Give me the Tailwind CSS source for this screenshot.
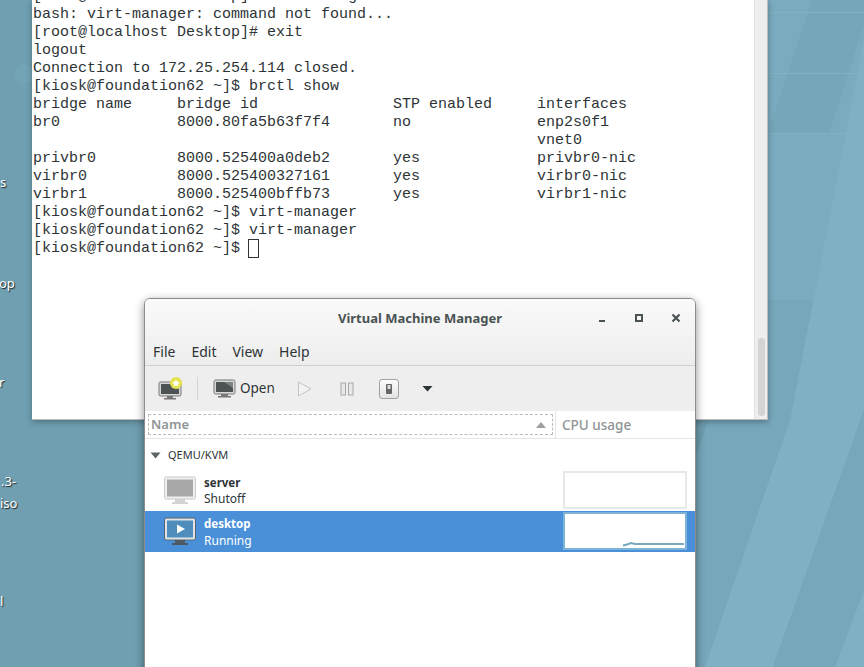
<!DOCTYPE html>
<html lang="en">
<head>
  <meta charset="UTF-8" />
  <title>Virtual Machine Manager</title>
  <script src="https://cdn.jsdelivr.net/npm/@tailwindcss/browser@4"></script>
</head>
<body class="relative w-[864px] h-[667px] overflow-hidden bg-[#74a5b7]">

  <!-- wallpaper -->
  <svg class="absolute inset-0" width="864" height="667" viewBox="0 0 864 667">
    <rect width="864" height="667" fill="#6f9fb1" />
    <polygon points="620,667 860,0 864,0 864,667" fill="#76a7ba" />
    <polygon points="768,0 864,0 864,300 768,300" fill="#7aabbe" />
    <polygon points="705,667 790,420 864,40 864,410 773,667" fill="#7fb0c3" />
    <polygon points="773,667 864,410 864,590 835,667" fill="#76a7ba" />
    <polygon points="835,667 864,590 864,667" fill="#7fb0c3" />
    <polygon points="812,0 864,0 864,25 829,133 768,133" fill="#75a6b9" />
    <rect x="768" y="12" width="96" height="1" fill="#81b1c3" />
    <rect x="768" y="73" width="96" height="1" fill="#81b1c3" />
    <rect x="768" y="133" width="96" height="1" fill="#81b1c3" />
    <circle cx="24" cy="74" r="10" fill="#73a4b6" />
  </svg>

  <!-- desktop icon labels, cut off at the screen edge -->
  <div class="absolute left-0 top-0 font-['Noto_Sans',sans-serif] text-[13px] leading-4 text-white [text-shadow:1px_1px_1px_#222]">
    <span class="absolute left-0 top-[174px]">s</span>
    <span class="absolute left-[-1px] top-[275px]">op</span>
    <span class="absolute left-[-1px] top-[374px]">r</span>
    <span class="absolute left-px top-[473px]">.3-</span>
    <span class="absolute left-0 top-[495px]">iso</span>
    <span class="absolute left-0 top-[593px]">l</span>
  </div>

  <!-- terminal window -->
  <div class="absolute left-[32px] top-0 w-[736px] h-[420px] flex bg-white border-b border-r border-[#bdbdbd] shadow-[0_2px_6px_rgba(0,0,0,0.3)]">
    <pre class="flex-1 h-full overflow-hidden pl-px text-[15px] leading-[18px] text-[#2e3436] font-['Liberation_Mono',monospace]"><div class="mt-[-12px]">[root@localhost Desktop]# virt-manager
bash: virt-manager: command not found...
[root@localhost Desktop]# exit
logout
Connection to 172.25.254.114 closed.
[kiosk@foundation62 ~]$ brctl show
bridge name     bridge id               STP enabled     interfaces
br0             8000.80fa5b63f7f4       no              enp2s0f1
                                                        vnet0
privbr0         8000.525400a0deb2       yes             privbr0-nic
virbr0          8000.525400327161       yes             virbr0-nic
virbr1          8000.525400bffb73       yes             virbr1-nic
[kiosk@foundation62 ~]$ virt-manager
[kiosk@foundation62 ~]$ virt-manager
[kiosk@foundation62 ~]$ <span class="inline-block ml-[-1px] mt-[-1px] w-[11px] h-[19px] border border-[#2e3436] align-top"></span></div></pre>
    <div class="w-[13px] h-full bg-[#eeeeee] border-l border-[#e2e2e2] flex flex-col justify-end items-center pb-[3px]">
      <div class="w-[7px] h-[78px] rounded-[4px] bg-[#d4d4d4]"></div>
    </div>
  </div>

  <!-- virt-manager window -->
  <div class="absolute left-[144px] top-[298px] w-[552px] h-[380px] flex flex-col rounded-t-[6px] border border-[#8c8c8c] bg-white shadow-[0_3px_10px_rgba(0,0,0,0.45)] overflow-hidden font-['Noto_Sans',sans-serif] text-[#2e3436]">

    <div class="bg-linear-to-b from-[#fafafa] to-[#ededed] h-[67px] shrink-0 border-b border-[#d0d0d0] flex flex-col">
      <div class="relative h-[40px] shrink-0 flex items-center justify-center">
        <span class="text-[13px] font-bold text-[#4a5254]">Virtual Machine Manager</span>
        <div class="absolute right-[14px] top-[14px] flex items-center gap-[27px]">
          <svg width="10" height="10" viewBox="0 0 10 10"><rect x="2" y="7" width="6" height="2" fill="#4a5254" /></svg>
          <svg width="10" height="10" viewBox="0 0 10 10"><rect x="2" y="2" width="6" height="6" fill="none" stroke="#4a5254" stroke-width="2" /></svg>
          <svg width="10" height="10" viewBox="0 0 10 10"><path d="M1.5 1.5 8.5 8.5M8.5 1.5 1.5 8.5" stroke="#4a5254" stroke-width="2.2" /></svg>
        </div>
      </div>
      <div class="flex gap-[16px] pl-[8px] text-[14px] leading-[20px] mt-[3px]">
        <span>File</span><span>Edit</span><span>View</span><span>Help</span>
      </div>
    </div>

    <!-- toolbar -->
    <div class="h-[45px] shrink-0 bg-[#eeeeee] flex items-center pl-[13px]">
      <svg width="26" height="24" viewBox="0 0 26 24">
        <rect x="1" y="5" width="22" height="14" rx="1.5" fill="#d8d8d8" stroke="#777" />
        <rect x="3" y="7" width="18" height="10" fill="#4d5254" />
        <path d="M12 7h9v6z" fill="#7c8284" />
        <path d="M9 19h6v2H9zM6 21h12v1.5H6z" fill="#777" />
        <circle cx="18" cy="6" r="6" fill="#e4e34e" />
        <path d="M18 2.2l1.2 2.5 2.7.3-2 1.9.5 2.7-2.4-1.3-2.4 1.3.5-2.7-2-1.9 2.7-.3z" fill="#fff" />
      </svg>
      <div class="w-px h-[23px] bg-[#d3d3d3] ml-[13px] mr-[15px]"></div>
      <svg width="23" height="20" viewBox="0 0 23 20">
        <rect x="1" y="1" width="21" height="14" rx="1.5" fill="#d8d8d8" stroke="#777" />
        <rect x="3" y="3" width="17" height="10" fill="#4d5254" />
        <path d="M11 3h9v6z" fill="#7c8284" />
        <path d="M8 15h7v2H8zM5 17h13v1.5H5z" fill="#777" />
      </svg>
      <span class="ml-[4px] text-[13.5px]">Open</span>
      <svg class="ml-[22px]" width="16" height="18" viewBox="0 0 16 18"><path d="M1.5 2 14 9 1.5 16Z" fill="#f2f2f2" stroke="#c4c4c4" /></svg>
      <svg class="ml-[27px]" width="14" height="14" viewBox="0 0 14 14"><rect x="1" y="1" width="4.5" height="12" fill="#e8e8e8" stroke="#a8a8a8" /><rect x="8.5" y="1" width="4.5" height="12" fill="#e8e8e8" stroke="#a8a8a8" /></svg>
      <div class="ml-[25px] w-[20px] h-[20px] rounded-[3px] border border-[#a2a2a2] bg-linear-to-b from-[#fbfbfb] to-[#e4e4e4] flex items-center justify-center">
        <svg width="8" height="12" viewBox="0 0 8 12"><rect x="1" y="1" width="6" height="10" rx="1" fill="#666" /><rect x="2.5" y="2" width="3" height="4" fill="#ddd" /></svg>
      </div>
      <svg class="ml-[23px]" width="11" height="7" viewBox="0 0 11 7"><path d="M0.5 1h10L5.5 6.5Z" fill="#2e3436" /></svg>
    </div>

    <!-- list header -->
    <div class="h-[28px] shrink-0 flex items-stretch border-b border-[#e6e6e6] text-[13px] font-semibold text-[#8f9596]">
      <div class="w-[410px] py-[3px] pl-[3px] pr-[2px]">
        <div class="h-full border border-dashed border-[#bbbbbb] flex items-center justify-between pl-[2px] pr-[6px]">
          <span>Name</span>
          <svg width="10" height="6" viewBox="0 0 10 6"><path d="M0 6 5 0 10 6Z" fill="#a0a0a0" /></svg>
        </div>
      </div>
      <div class="flex-1 border-l border-[#e6e6e6] flex items-center pl-[6px] pt-px"><span class="font-medium text-[13.5px]">CPU usage</span></div>
    </div>

    <!-- connection -->
    <div class="h-[31px] shrink-0 flex items-center pl-[5px] pt-px gap-[7px] text-[11px]">
      <svg width="11" height="7" viewBox="0 0 11 7"><path d="M0.5 0.5h10L5.5 6.5Z" fill="#5f6668" /></svg>
      <span>QEMU/KVM</span>
    </div>

    <!-- server -->
    <div class="h-[41px] shrink-0 flex items-center pl-[19px] pr-[8px]">
      <svg width="32" height="30" viewBox="0 0 32 30">
        <rect x="0.5" y="1" width="31" height="22" rx="2" fill="#f0f0f0" stroke="#c8c8c8" />
        <rect x="3" y="3.5" width="26" height="17" fill="#a8a8a8" />
        <path d="M11 23h10v3H11zM8 26h16v2H8z" fill="#d2d2d2" />
      </svg>
      <div class="ml-[8px] flex-1 leading-[16px]">
        <div class="font-bold text-[11.5px]">server</div>
        <div class="text-[12px]">Shutoff</div>
      </div>
      <div class="mt-[-2px] w-[124px] h-[38px] bg-white border-2 border-[#e8e8e8]"></div>
    </div>

    <!-- desktop, selected -->
    <div class="h-[41px] shrink-0 flex items-center pl-[19px] pr-[8px] bg-[#4a90d9] text-white">
      <svg width="32" height="30" viewBox="0 0 32 30">
        <rect x="0.5" y="1" width="31" height="22" rx="2" fill="#dfe4e8" stroke="#55636e" />
        <rect x="3" y="3.5" width="26" height="17" fill="#4f8dbd" />
        <path d="M13 7.5 21 12 13 16.5Z" fill="#fff" />
        <path d="M11 23h10v3H11zM8 26h16v2H8z" fill="#4d5a64" />
      </svg>
      <div class="ml-[8px] flex-1 leading-[17px] pt-px">
        <div class="font-bold text-[11.5px]">desktop</div>
        <div class="text-[12px]">Running</div>
      </div>
      <div class="relative mt-[-2px] w-[124px] h-[38px] bg-white border-2 border-[#7db3d6]">
        <svg class="absolute left-0 top-0" width="120" height="34" viewBox="0 0 120 34">
          <path d="M58 31.5 62 30.5 66 29 70 30H119" fill="none" stroke="#78a9bc" stroke-width="2" />
        </svg>
      </div>
    </div>

    <div class="flex-1 bg-white"></div>
  </div>
</body>
</html>
